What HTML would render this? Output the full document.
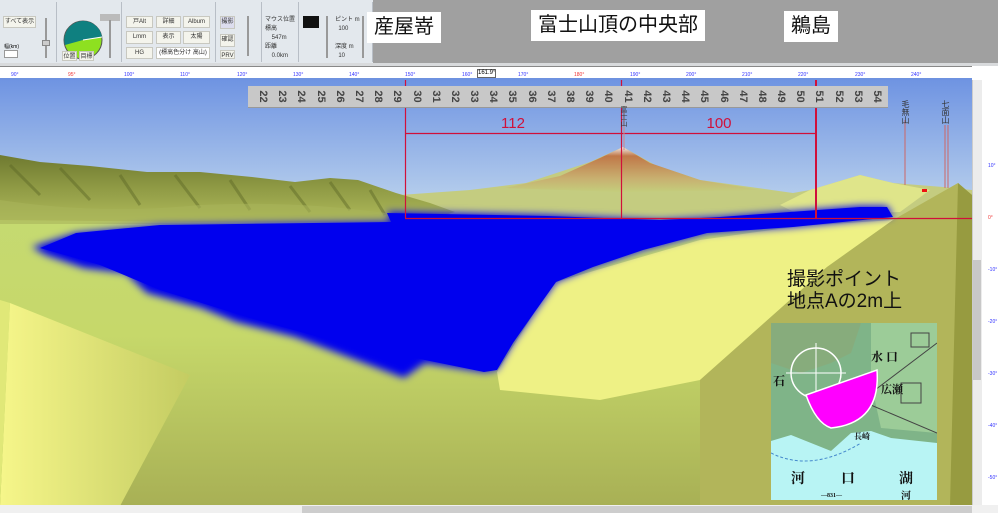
<!DOCTYPE html>
<html><head><meta charset="utf-8"><style>
*{margin:0;padding:0;box-sizing:border-box}
body{width:998px;height:513px;overflow:hidden;background:#fff;font-family:"Liberation Sans","Noto Sans CJK JP",sans-serif;position:relative}
.abs{position:absolute}
.tb{left:0;top:0;width:373px;height:63px;background:#e3e8ed}
.pnl{top:2px;height:60px;border-right:1px solid #b8bec6}
.btn{position:absolute;background:#f4f4ec;border:1px solid #c8c8c0;font-size:6px;color:#333;text-align:center;line-height:10px}
.lbl{background:#fff;color:#111;font-size:20px;line-height:31px;padding:0 7px;white-space:nowrap}
.rl{font-size:5px;color:#33f;top:72px}
</style></head><body>
<div class="abs tb"></div>
<div class="abs" style="left:373px;top:0;width:625px;height:63px;background:#a0a0a0"></div>
<div class="abs" style="left:0;top:63px;width:998px;height:3px;background:#d8dadc"></div>
<div class="abs pnl" style="left:0;width:57px"></div>
<div class="abs pnl" style="left:57px;width:65px"></div>
<div class="abs pnl" style="left:122px;width:94px"></div>
<div class="abs pnl" style="left:216px;width:46px"></div>
<div class="abs pnl" style="left:262px;width:37px"></div>
<div class="abs pnl" style="left:299px;width:74px"></div>
<div class="btn" style="left:3px;top:16px;width:33px;height:12px">すべて表示</div>
<div class="abs" style="left:4px;top:43px;font-size:5px">幅(km)</div>
<div class="abs" style="left:4px;top:50px;width:14px;height:8px;background:#fff;border:1px solid #999"></div>
<div class="abs" style="left:45px;top:18px;width:2px;height:40px;background:#999"></div>
<div class="abs" style="left:42px;top:40px;width:8px;height:6px;background:#ccc;border:1px solid #888"></div>
<svg class="abs" style="left:62px;top:19px" width="42" height="42"><circle cx="21" cy="21" r="19" fill="#8ee020" stroke="#555"/><path d="M21 21 L21 2 A19 19 0 0 0 3 26 Z" fill="#0f8080"/><path d="M21 21 L40 18 A19 19 0 0 0 21 2Z" fill="#0f8080"/><line x1="21" y1="21" x2="40" y2="18" stroke="#fff"/></svg>
<div class="btn" style="left:62px;top:51px;width:15px;height:10px">位置</div>
<div class="btn" style="left:79px;top:51px;width:15px;height:10px">目標</div>
<div class="abs" style="left:100px;top:14px;width:20px;height:7px;background:#bbb"></div>
<div class="abs" style="left:109px;top:20px;width:2px;height:38px;background:#999"></div>
<div class="btn" style="left:126px;top:16px;width:27px;height:12px">戸Alt</div>
<div class="btn" style="left:156px;top:16px;width:25px;height:12px">詳細</div>
<div class="btn" style="left:183px;top:16px;width:27px;height:12px">Album</div>
<div class="btn" style="left:126px;top:31px;width:27px;height:13px">Lmm</div>
<div class="btn" style="left:156px;top:31px;width:25px;height:13px">表示</div>
<div class="btn" style="left:183px;top:31px;width:27px;height:13px">太陽</div>
<div class="btn" style="left:126px;top:47px;width:27px;height:12px">HG</div>
<div class="btn" style="left:156px;top:47px;width:54px;height:12px;background:#fff">(標高色分け 高山)</div>
<div class="btn" style="left:220px;top:16px;width:15px;height:13px;background:#dde">撮影</div>
<div class="btn" style="left:220px;top:34px;width:15px;height:13px">確認</div>
<div class="btn" style="left:220px;top:50px;width:15px;height:9px">PRV</div>
<div class="abs" style="left:247px;top:16px;width:2px;height:40px;background:#999"></div>
<div class="abs" style="left:265px;top:16px;font-size:6px;line-height:9px;color:#333">マウス位置<br>標高<br>&nbsp;&nbsp;&nbsp;&nbsp;547m<br>距離<br>&nbsp;&nbsp;&nbsp;&nbsp;0.0km</div>
<div class="abs" style="left:303px;top:16px;width:16px;height:12px;background:#111"></div>
<div class="abs" style="left:326px;top:16px;width:2px;height:42px;background:#999"></div>
<div class="abs" style="left:335px;top:16px;font-size:6px;line-height:9px;color:#333">ピント m<br>&nbsp;&nbsp;100<br><br>深度 m<br>&nbsp;&nbsp;10</div>
<div class="abs" style="left:362px;top:16px;width:2px;height:42px;background:#999"></div>
<div class="abs" style="left:0;top:66px;width:972px;height:14px;background:#fff;border-top:1px solid #888"></div>
<div class="abs" style="left:0;top:78px;width:972px;height:2px;background:#6e92e0"></div>
<div class="abs rl" style="left:11px">90°</div><div class="abs rl" style="left:68px;color:#e33">95°</div>
<div class="abs rl" style="left:124px">100°</div><div class="abs rl" style="left:180px">110°</div>
<div class="abs rl" style="left:237px">120°</div><div class="abs rl" style="left:293px">130°</div>
<div class="abs rl" style="left:349px">140°</div><div class="abs rl" style="left:405px">150°</div>
<div class="abs rl" style="left:462px">160°</div><div class="abs rl" style="left:518px">170°</div>
<div class="abs rl" style="left:574px;color:#e33">180°</div><div class="abs rl" style="left:630px">190°</div>
<div class="abs rl" style="left:686px">200°</div><div class="abs rl" style="left:742px">210°</div>
<div class="abs rl" style="left:798px">220°</div><div class="abs rl" style="left:855px">230°</div>
<div class="abs rl" style="left:911px">240°</div>
<div class="abs" style="left:477px;top:69px;font-size:6px;border:1px solid #666;background:#fff;line-height:7px">161.9°</div>
<svg class="abs" style="left:0;top:80px" width="972" height="426" viewBox="0 80 972 426">
<defs>
<linearGradient id="sky" x1="0" y1="0" x2="0" y2="1"><stop offset="0" stop-color="#6f94e2"/><stop offset="1" stop-color="#c2d8ee"/></linearGradient>
<linearGradient id="gr" x1="0" y1="0" x2="0" y2="1"><stop offset="0" stop-color="#c5da72"/><stop offset="0.45" stop-color="#c6d86a"/><stop offset="1" stop-color="#a8b055"/></linearGradient>
<linearGradient id="fuji" x1="0" y1="0" x2="0" y2="1"><stop offset="0" stop-color="#f2eeee"/><stop offset="0.2" stop-color="#c07848"/><stop offset="0.7" stop-color="#c8b070"/><stop offset="1" stop-color="#c4cd7c"/></linearGradient>
<linearGradient id="ly" x1="0" y1="0" x2="1" y2="0"><stop offset="0" stop-color="#f6f68a"/><stop offset="1" stop-color="#c4cc62"/></linearGradient>
<linearGradient id="mt" x1="0" y1="0" x2="0" y2="1"><stop offset="0" stop-color="#6f7a30"/><stop offset="1" stop-color="#b0bb5a"/></linearGradient>
<filter id="bl"><feGaussianBlur stdDeviation="4"/></filter>
</defs>
<rect x="0" y="80" width="972" height="140" fill="url(#sky)"/>
<rect x="0" y="195" width="972" height="311" fill="url(#gr)"/>
<path d="M400 195 L470 190 L526 183 L590 162 L623 147 L655 165 L700 180 L793 193 L810 190 L860 175 L893 183 L943 187 L972 190 L972 225 L400 225Z" fill="#c4cc80"/>
<path d="M505 188 L560 176 L600 158 L623 147 L650 163 L700 180 L760 190 L620 192Z" fill="url(#fuji)"/>
<path d="M780 205 L810 190 L860 175 L893 183 L930 190 L900 212 L800 215Z" fill="#dfe58a"/>
<path d="M0 155 L40 162 L90 166 L147 172 L200 172 L252 177 L295 182 L330 178 L358 180 L396 193 L430 203 L455 212 L420 222 L200 222 L0 220Z" fill="url(#mt)"/>
<g stroke="#5a6526" stroke-width="3" opacity=".45" fill="none">
<path d="M10 165 L40 195 M60 168 L90 200 M120 175 L140 205 M175 175 L200 208 M230 180 L250 210 M290 186 L310 212 M330 182 L350 210 M370 190 L385 215"/>
</g>
<path d="M0 200 Q100 215 200 205 Q300 200 400 215 L400 224 L0 224Z" fill="#a9b45a" opacity=".6"/>
<path d="M10 303 L0 506 L120 506 L190 375 Z" fill="url(#ly)"/>
<path d="M0 300 L10 303 L0 506Z" fill="#e0e878"/>
<path d="M497 372 L534 313 L556 282 L631 260 L700 240 L800 226 L893 220 L827 267 L700 380 L600 400 L500 390Z" fill="#eef185"/>
<path d="M893 220 L958 183 L972 195 L972 506 L700 506 L700 380 L827 267Z" fill="#b2b55a"/>
<path d="M958 183 L972 195 L972 506 L950 506Z" fill="#979b40"/>
<g>
<path d="M32 247 L76 233 L160 225 L391 222 L387 212 L547 215 L660 220 L720 217 L860 206 L887 206 L893 217 L793 227 L707 233 L643 250 L593 267 L556 282 L534 313 L513 343 L497 370 L484 372 L425 363 L404 378 L295 337 L236 322 L202 308 L147 293 L126 273 L84 268 L46 255Z" fill="#0000ee" filter="url(#bl)"/>
<path d="M40 248 L76 233 L160 225 L391 222 L387 213 L547 216 L660 220 L720 217 L860 207 L887 207 L893 217 L793 227 L707 233 L643 250 L593 267 L556 282 L534 313 L513 343 L497 370 L484 372 L425 360 L330 340 L250 318 L160 290 L100 265Z" fill="#0000ee"/>
</g>
<g stroke="#d0103a" stroke-width="1.2" fill="none">
<line x1="405.5" y1="80" x2="405.5" y2="218"/>
<line x1="621.5" y1="80" x2="621.5" y2="218"/>
<line x1="816" y1="80" x2="816" y2="218" stroke-width="2"/>
<line x1="405" y1="218.5" x2="972" y2="218.5"/>
<line x1="405" y1="133.5" x2="816" y2="133.5"/>
</g>
<line x1="624" y1="110" x2="624" y2="150" stroke="#c88"/>
<line x1="905" y1="120" x2="905" y2="185" stroke="#c66"/>
<line x1="945" y1="125" x2="945" y2="188" stroke="#c66"/>
<line x1="948" y1="125" x2="948" y2="188" stroke="#c66"/>
<rect x="922" y="189" width="5" height="3" fill="#e11"/>
<text x="513" y="128" font-size="15" fill="#d0103a" text-anchor="middle" font-family="Liberation Sans">112</text>
<text x="719" y="128" font-size="15" fill="#d0103a" text-anchor="middle" font-family="Liberation Sans">100</text>
</svg>
<div class="abs" style="left:248px;top:86px;width:640px;height:22px;background:#c8c8c8;border-bottom:1px solid #999;display:flex;font-size:11px;font-weight:bold;color:#444">
<span style="width:6px"></span>
<script>document.write([...Array(33)].map((_,i)=>'<span style="width:19.2px;display:inline-block;text-align:center;line-height:22px;transform:rotate(90deg)">'+(22+i)+'</span>').join(''))</script>
</div>
<div class="abs" style="left:618px;top:106px;font-size:7px;writing-mode:vertical-rl;color:#333">富士山</div>
<div class="abs" style="left:900px;top:100px;font-size:8px;writing-mode:vertical-rl;color:#333">毛無山</div>
<div class="abs" style="left:940px;top:100px;font-size:8px;writing-mode:vertical-rl;color:#333">七面山</div>
<div class="abs lbl" style="left:367px;top:12px">産屋嵜</div>
<div class="abs lbl" style="left:531px;top:10px">富士山頂の中央部</div>
<div class="abs lbl" style="left:784px;top:11px">鵜島</div>
<div class="abs" style="left:787px;top:269px;font-size:19px;line-height:22px;color:#111">撮影ポイント<br>地点Aの2m上</div>
<svg class="abs" style="left:771px;top:323px" width="166" height="177">
<rect width="166" height="177" fill="#b8f4f4"/>
<path d="M0 0 H166 V120 L120 115 L100 108 L80 110 L60 128 L40 120 L20 112 L0 118Z" fill="#7fb488"/>
<path d="M0 0 H90 L80 30 L60 40 L30 50 L0 40Z" fill="#8aa878" opacity=".7"/>
<path d="M100 0 H166 V110 L110 105 L100 60Z" fill="#9ccc98"/>
<g stroke="#444" fill="none" stroke-width="1"><rect x="140" y="10" width="18" height="14"/><rect x="130" y="60" width="20" height="20"/><line x1="100" y1="70" x2="166" y2="20"/><line x1="95" y1="80" x2="166" y2="110"/></g>
<path d="M0 130 Q40 150 90 120" stroke="#48c" stroke-dasharray="3 2" fill="none"/>
<circle cx="45" cy="50" r="25" fill="none" stroke="#fff" stroke-width="1.5"/>
<line x1="45" y1="20" x2="45" y2="80" stroke="#fff"/><line x1="15" y1="50" x2="75" y2="50" stroke="#fff"/>
<path d="M35 72 L106 47 Q110 100 60 105 Q45 100 35 72Z" fill="#f0f" stroke="#fff" stroke-width="1.5"/>
<g font-family="Liberation Serif,Noto Serif CJK SC,serif" fill="#111" font-weight="bold">
<text x="100" y="38" font-size="12">水 口</text><text x="2" y="62" font-size="12">石</text>
<text x="110" y="70" font-size="11">広瀬</text><text x="83" y="116" font-size="8">長崎</text>
<text x="20" y="160" font-size="14">河</text><text x="70" y="160" font-size="14">口</text><text x="128" y="160" font-size="14">湖</text>
<text x="50" y="174" font-size="6">—831—</text><text x="130" y="176" font-size="10">河</text>
</g>
</svg>
<div class="abs" style="left:972px;top:80px;width:26px;height:425px;background:#fff"></div>
<div class="abs" style="left:972px;top:80px;width:10px;height:425px;background:#ececec;border-left:1px solid #ccc"></div>
<div class="abs" style="left:973px;top:260px;width:8px;height:120px;background:#c8c8c8"></div>
<div class="abs" style="left:988px;top:140px;font-size:5px;color:#33f;line-height:52px">10°<br><span style="color:#e33">0°</span><br>-10°<br>-20°<br>-30°<br>-40°<br>-50°</div>
<div class="abs" style="left:0;top:505px;width:998px;height:8px;background:#f0f0f0"></div>
<div class="abs" style="left:302px;top:506px;width:670px;height:7px;background:#cdcdcd"></div>
</body></html>
